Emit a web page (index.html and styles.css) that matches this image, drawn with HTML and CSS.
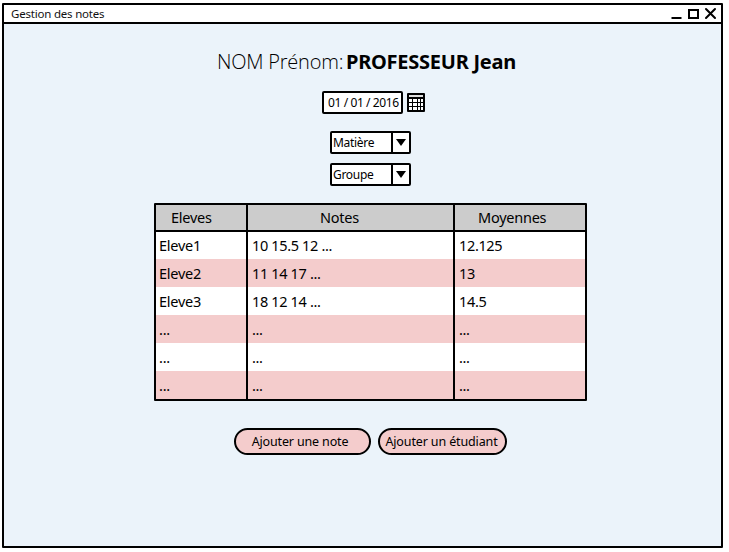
FILE: index.html
```html
<!DOCTYPE html>
<html lang="fr">
<head>
<meta charset="utf-8">
<title>Gestion des notes</title>
<link rel="stylesheet" href="styles.css">
</head>
<body>
<div class="window">
  <header class="titlebar">
    <span class="title">Gestion des notes</span>
    <svg class="controls" width="48" height="17" viewBox="0 0 48 17" fill="none" stroke="#000" stroke-width="2">
      <path d="M1.5 13H11.5"/>
      <rect x="19" y="5" width="9" height="8"/>
      <path d="M36 4L45 13M45 4L36 13" stroke-linecap="round"/>
    </svg>
  </header>
  <main class="content">
    <h1 class="heading"><span class="label">NOM Prénom:</span><strong class="name">PROFESSEUR Jean</strong></h1>
    <div class="date">
      <div class="date-field"><span>01 / 01 / 2016</span></div>
      <svg width="18" height="19" viewBox="0 0 18 19">
        <rect width="18" height="19" rx="1" fill="#000"/>
        <path fill="#ddd" d="M2 2h14v2H2z"/>
        <path fill="#fff" d="M2 6h3v3H2zM6 6h4v3H6zM11 6h2v3h-2zM14 6h2v3h-2zM2 10h3v3H2zM6 10h4v3H6zM11 10h2v3h-2zM14 10h2v3h-2zM2 14h3v3H2zM6 14h4v3H6zM11 14h2v3h-2zM14 14h2v3h-2z"/>
      </svg>
    </div>
    <div class="select"><span class="value">Matière</span><span class="arrow"><svg width="10" height="7" viewBox="0 0 10 7"><path d="M0 0H10L5 7Z"/></svg></span></div>
    <div class="select"><span class="value">Groupe</span><span class="arrow"><svg width="10" height="7" viewBox="0 0 10 7"><path d="M0 0H10L5 7Z"/></svg></span></div>
    <div class="grades">
      <div class="row head"><span>Eleves</span><span>Notes</span><span>Moyennes</span></div>
      <div class="row"><span>Eleve1</span><span>10 15.5 12 ...</span><span>12.125</span></div>
      <div class="row"><span>Eleve2</span><span>11 14 17 ...</span><span>13</span></div>
      <div class="row"><span>Eleve3</span><span>18 12 14 ...</span><span>14.5</span></div>
      <div class="row"><span>...</span><span>...</span><span>...</span></div>
      <div class="row"><span>...</span><span>...</span><span>...</span></div>
      <div class="row"><span>...</span><span>...</span><span>...</span></div>
    </div>
    <div class="actions">
      <button class="add-note">Ajouter une note</button>
      <button class="add-student">Ajouter un étudiant</button>
    </div>
  </main>
</div>
</body>
</html>
```
FILE: styles.css
```css
* { box-sizing: border-box; }
body {
  margin: 0;
  padding: 3px 0 0 2px;
  background: #fff;
  color: #000;
  font-family: "Noto Sans", "Open Sans", sans-serif;
  white-space: nowrap;
}
.window {
  width: 721px;
  height: 545px;
  border: 2px solid #000;
  border-radius: 1px;
  background: #ebf3fa;
}
.titlebar {
  display: flex;
  justify-content: space-between;
  height: 19px;
  padding: 0 3px 0 7px;
  border-bottom: 2px solid #000;
  background: #fff;
}
.title { font-size: 11.5px; line-height: 17px; letter-spacing: -0.2px; color: #111; }
.controls { display: block; }
.heading {
  display: flex;
  margin: 24px 0 0 213px;
  height: 28px;
  font-size: 20px;
  line-height: 27px;
  font-weight: 400;
}
.label { width: 129px; font-family: "Open Sans", "Noto Sans", sans-serif; font-weight: 300; letter-spacing: -0.22px; }
.name { font-weight: 700; letter-spacing: -0.25px; }
.date { display: flex; align-items: center; gap: 4px; margin: 15px 0 0 318px; height: 23px; }
.date-field {
  width: 81px;
  height: 23px;
  padding-left: 4px;
  border: 2px solid #000;
  border-radius: 2px;
  background: #fff;
  font-size: 12px;
  line-height: 19px;
  letter-spacing: -0.4px;
}
.select {
  display: flex;
  width: 81px;
  height: 23px;
  margin: 17px 0 0 326px;
  border: 2px solid #000;
  border-radius: 2px;
  background: #fff;
  font-size: 12px;
  line-height: 19px;
}
.select + .select { margin-top: 9px; }
.value { width: 59px; padding-left: 1px; letter-spacing: -0.3px; }
.arrow { display: flex; align-items: center; justify-content: center; width: 18px; border-left: 2px solid #000; }
.grades {
  width: 433px;
  height: 198px;
  margin: 17px 0 0 150px;
  border: 2px solid #000;
  border-radius: 1px;
  background: #fff;
  font-size: 14.5px;
  line-height: 28px;
  letter-spacing: -0.25px;
}
.row { display: grid; grid-template-columns: 92px 207px 130px; height: 28px; }
.row:nth-child(2) { height: 27px; line-height: 26px; }
.row:nth-child(odd) { background: #f4cccc; }
.row span { padding-left: 4px; }
.row span:first-child { padding-left: 3px; }
.row span:nth-child(2), .row span:nth-child(3) { letter-spacing: -0.35px; }
.row span:not(:last-child) { border-right: 2px solid #000; }
.row.head { height: 27px; border-bottom: 2px solid #000; background: #ccc; line-height: 24px; }
.row.head span { height: 25px; letter-spacing: -0.25px; }
.row.head span:nth-child(1) { padding-left: 15px; }
.row.head span:nth-child(2) { padding-left: 72px; }
.row.head span:nth-child(3) { padding-left: 23px; }
.actions { display: flex; gap: 7px; margin: 27px 0 0 230px; }
button {
  height: 27px;
  padding: 0;
  border: 2px solid #000;
  border-radius: 14px;
  background: #f4cccc;
  color: #000;
  font: 12.5px/23px "Noto Sans", "Open Sans", sans-serif;
}
.add-note { width: 137px; padding-right: 5px; letter-spacing: -0.15px; }
.add-student { width: 129px; padding-right: 2px; letter-spacing: -0.13px; }
```
